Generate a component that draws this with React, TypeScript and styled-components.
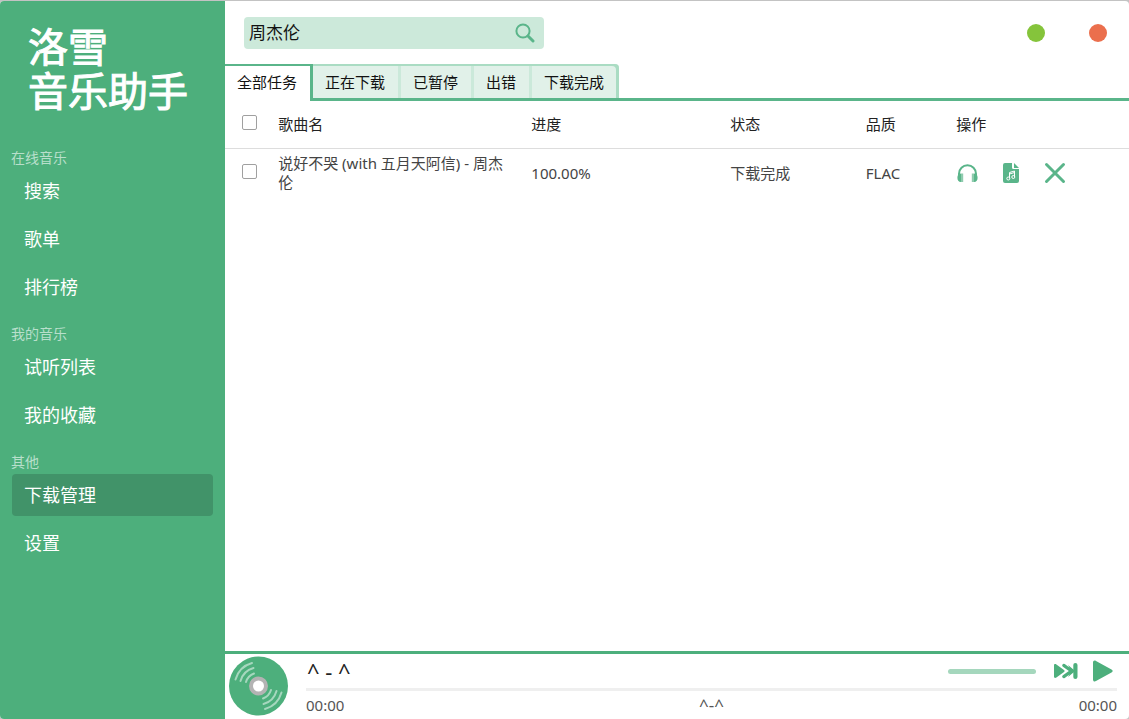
import React from "react";
import styled, { createGlobalStyle, css } from "styled-components";

const green = "#4daf7c";
const soft = "#5ab58a";
const cjk = `"Noto Sans", "Noto Sans CJK SC", sans-serif`;

const Global = createGlobalStyle`
  *, *::before, *::after { box-sizing: border-box; }
  body { margin: 0; background: #c3c3c3; font-family: ${cjk}; font-size: 15px; color: #333; }
  button, input { font: inherit; }
`;

const Shell = styled.div`
  display: flex;
  min-height: calc(100vh - 1px);
  margin-top: 1px;
  border-radius: 4px;
  overflow: hidden;
  background: #fff;
`;

const Sidebar = styled.aside`
  flex: 0 0 225px;
  padding: 22px 12px 12px;
  background: ${green};
  color: #fff;
`;

const Logo = styled.h1`
  margin: 0;
  padding: 0 0 21px 16px;
  font-family: "Noto Sans CJK SC", sans-serif;
  font-size: 40px;
  line-height: 44px;
  font-weight: 400;
  white-space: nowrap;
  -webkit-text-stroke: 1px #fff;
`;

const NavGroup = styled.section`
  margin-top: 14px;
`;

const NavLabel = styled.h2`
  margin: 0 0 0 -1px;
  font-size: 14px;
  line-height: 24px;
  font-weight: 400;
  color: #b8dfcb;
`;

const NavList = styled.ul`
  display: grid;
  gap: 6px;
  margin: 0;
  padding: 0;
  list-style: none;
`;

const NavLink = styled.a<{ $active?: boolean }>`
  display: block;
  padding: 0 12px;
  border-radius: 4px;
  font-size: 18px;
  line-height: 42px;
  color: #fff;
  text-decoration: none;
  background: ${(p) => (p.$active ? "#419369" : "transparent")};
`;

const Main = styled.main`
  display: flex;
  flex: 1;
  flex-direction: column;
  min-width: 0;
`;

const Toolbar = styled.header`
  display: flex;
  align-items: center;
  justify-content: space-between;
  padding: 16px 22px 15px 19px;
`;

const Search = styled.form`
  display: flex;
  align-items: center;
  width: 300px;
  height: 32px;
  border-radius: 4px;
  background: #cce9da;
`;

const SearchInput = styled.input`
  flex: 1;
  min-width: 0;
  padding: 0 0 0 5px;
  border: 0;
  outline: 0;
  background: transparent;
  font-size: 17px;
  line-height: 32px;
  color: #111;
`;

const IconButton = styled.button`
  display: flex;
  flex: none;
  padding: 0;
  border: 0;
  background: none;
  color: ${soft};
  cursor: pointer;
`;

const SearchButton = styled(IconButton)`
  padding: 0 9px 0 8px;
`;

const WindowButtons = styled.div`
  display: flex;
  gap: 44px;
`;

const Dot = styled.button<{ $color: string }>`
  width: 18px;
  height: 18px;
  padding: 0;
  border: 0;
  border-radius: 50%;
  background: ${(p) => p.$color};
`;

const Tabs = styled.div`
  display: flex;
  height: 37px;
`;

const Tab = styled.button<{ $active?: boolean }>`
  padding: 0 16px 2px 12px;
  border: 0;
  background: #e1f1e9;
  box-shadow: inset 0 -3px ${soft}, inset 0 2px #aadcc3, inset -3px 0 #cbe9da;
  font-size: 15px;
  line-height: 34px;
  color: #111;
  white-space: nowrap;
  &:last-of-type {
    padding-right: 15px;
    border-top-right-radius: 4px;
    box-shadow: inset 0 -3px ${soft}, inset -3px 2px #aadcc3;
  }
  ${(p) =>
    p.$active &&
    css`
      background: #fff;
      box-shadow: inset -3px 2px ${soft};
    `}
`;

const TabRule = styled.div`
  flex: 1;
  border-bottom: 3px solid ${soft};
`;

const Content = styled.div`
  flex: 1;
`;

const Table = styled.table`
  width: 100%;
  table-layout: fixed;
  border-collapse: collapse;
  text-align: left;
  line-height: 19px;
`;

const Col = styled.col<{ $w: number }>`
  width: ${(p) => p.$w}%;
`;

const HeadCell = styled.th`
  height: 47px;
  padding: 0 8px;
  border-bottom: 1px solid #ddd;
  font-weight: 400;
  color: #222;
`;

const Cell = styled.td`
  height: 50px;
  padding: 0 8px;
  color: #444;
`;

const Check = styled.input`
  display: block;
  width: 15px;
  height: 15px;
  margin: 0 0 4px 9px;
  border: 1px solid #a0a0a0;
  border-radius: 2px;
  background: #fff;
  appearance: none;
  &:checked { background: ${green}; }
`;

const Actions = styled.div`
  display: flex;
  gap: 22px;
`;

const Player = styled.footer`
  display: flex;
  border-top: 3px solid ${green};
  padding: 0 12px 0 4px;
`;

const Disc = styled.svg`
  flex: none;
  margin: 2px 17px 0 0;
`;

const PlayerBody = styled.div`
  flex: 1;
  min-width: 0;
`;

const PlayerTop = styled.div`
  display: flex;
  align-items: center;
  height: 34px;
  padding: 0 3px 0 1px;
`;

const Song = styled.div`
  flex: 1;
  font-size: 22px;
  line-height: 34px;
  color: #222;
`;

const Volume = styled.input`
  width: 88px;
  height: 5px;
  margin: 0 18px 0 0;
  border-radius: 3px;
  background: #a5d7bd;
  appearance: none;
  &::-webkit-slider-thumb { appearance: none; width: 0; height: 0; }
`;

const NextButton = styled(IconButton)`
  color: ${green};
`;

const PlayButton = styled(IconButton)`
  margin-left: 14px;
  color: ${green};
`;

const Track = styled.div`
  height: 3px;
  background: #efefef;
`;

const PlayerBottom = styled.div`
  display: grid;
  grid-template-columns: 1fr auto 1fr;
  line-height: 28px;
  color: #555;
`;

const Lyric = styled.span`
  font-size: 17px;
`;

const TotalTime = styled.span`
  text-align: right;
`;

const groups = [
  { label: "在线音乐", items: ["搜索", "歌单", "排行榜"] },
  { label: "我的音乐", items: ["试听列表", "我的收藏"] },
  { label: "其他", items: ["下载管理", "设置"] },
];
const tabs = ["全部任务", "正在下载", "已暂停", "出错", "下载完成"];

export default function App() {
  return (
    <>
      <Global />
      <Shell>
        <Sidebar>
          <Logo>洛雪<br />音乐助手</Logo>
          <nav>
            {groups.map((g) => (
              <NavGroup key={g.label}>
                <NavLabel>{g.label}</NavLabel>
                <NavList>
                  {g.items.map((item) => (
                    <li key={item}>
                      <NavLink href="#" $active={item === "下载管理"}>{item}</NavLink>
                    </li>
                  ))}
                </NavList>
              </NavGroup>
            ))}
          </nav>
        </Sidebar>
        <Main>
          <Toolbar>
            <Search onSubmit={(e) => e.preventDefault()}>
              <SearchInput aria-label="搜索" defaultValue="周杰伦" />
              <SearchButton aria-label="搜索">
                <svg width="20" height="20" viewBox="0 0 20 20" fill="none" stroke="currentColor">
                  <circle cx="8" cy="8" r="6.6" strokeWidth="2" />
                  <path d="M13 13l5 5" strokeWidth="3" strokeLinecap="round" />
                </svg>
              </SearchButton>
            </Search>
            <WindowButtons>
              <Dot $color="#85c43b" aria-label="最小化" />
              <Dot $color="#eb6f4d" aria-label="关闭" />
            </WindowButtons>
          </Toolbar>
          <Tabs role="tablist">
            {tabs.map((t, i) => (
              <Tab key={t} role="tab" aria-selected={i === 0} $active={i === 0}>{t}</Tab>
            ))}
            <TabRule />
          </Tabs>
          <Content>
            <Table>
              <colgroup>
                <Col $w={5} />
                <Col $w={28} />
                <Col $w={22} />
                <Col $w={15} />
                <Col $w={10} />
                <Col $w={20} />
              </colgroup>
              <thead>
                <tr>
                  <HeadCell><Check type="checkbox" aria-label="全选" /></HeadCell>
                  <HeadCell>歌曲名</HeadCell>
                  <HeadCell>进度</HeadCell>
                  <HeadCell>状态</HeadCell>
                  <HeadCell>品质</HeadCell>
                  <HeadCell>操作</HeadCell>
                </tr>
              </thead>
              <tbody>
                <tr>
                  <Cell><Check type="checkbox" aria-label="选择 说好不哭" /></Cell>
                  <Cell>说好不哭 (with 五月天阿信) - 周杰伦</Cell>
                  <Cell>100.00%</Cell>
                  <Cell>下载完成</Cell>
                  <Cell>FLAC</Cell>
                  <Cell>
                    <Actions>
                      <IconButton aria-label="播放">
                        <svg width="22" height="22" viewBox="0 0 22 22">
                          <path d="M3 14v-2.2a8.500 8.500 0 0 1 17 0V14" fill="none" stroke="currentColor" strokeWidth="2" />
                          <path d="M5 11.500C2.500 11.500 1.400 13.200 1.400 15.700S2.500 20 5 20zM18 11.500c2.500 0 3.600 1.700 3.600 4.200S20.500 20 18 20z" fill="currentColor" />
                          <path d="M5 11.500h2.200V20H5zM15.800 11.500H18V20h-2.200z" fill="#8fcbae" />
                        </svg>
                      </IconButton>
                      <IconButton aria-label="打开文件">
                        <svg width="22" height="22" viewBox="0 0 22 22">
                          <path d="M5 1h7v4.500a1.500 1.500 0 0 0 1.500 1.500H19v12a2 2 0 0 1-2 2H5a2 2 0 0 1-2-2V3a2 2 0 0 1 2-2z" fill="currentColor" />
                          <path d="M14 1l5 5h-5z" fill="currentColor" />
                          <path d="M9.500 16.500v-6l5-1.500v6M9.500 12l5-1.500" fill="none" stroke="#fff" strokeWidth="1" />
                          <circle cx="8.300" cy="16.500" r="1.500" fill="none" stroke="#fff" />
                          <circle cx="13.300" cy="15" r="1.500" fill="none" stroke="#fff" />
                        </svg>
                      </IconButton>
                      <IconButton aria-label="删除">
                        <svg width="22" height="22" viewBox="0 0 22 22">
                          <path d="M2.500 2.500l17 17M19.500 2.500l-17 17" fill="none" stroke="currentColor" strokeWidth="3" strokeLinecap="round" />
                        </svg>
                      </IconButton>
                    </Actions>
                  </Cell>
                </tr>
              </tbody>
            </Table>
          </Content>
          <Player>
            <Disc width="60" height="60" viewBox="0 0 60 60">
              <circle cx="29.500" cy="30" r="29.500" fill={green} />
              <circle cx="29.500" cy="30" r="7.500" fill="#fff" stroke="#b3b3b3" strokeWidth="4" />
              <g fill="none" stroke="#fff" strokeOpacity="0.500" strokeWidth="2" strokeLinecap="round">
                <path d="M6.500 23.500A24 24 0 0 1 23 7M11.500 25A18.700 18.700 0 0 1 24.500 12M17 26A13.200 13.200 0 0 1 25 17.500" />
                <path d="M52.500 36.500A24 24 0 0 1 36 53M47.500 35A18.700 18.700 0 0 1 34.500 48M42 34A13.200 13.200 0 0 1 34 42.500" />
              </g>
            </Disc>
            <PlayerBody>
              <PlayerTop>
                <Song>^ - ^</Song>
                <Volume type="range" aria-label="音量" defaultValue={100} />
                <NextButton aria-label="下一首">
                  <svg width="24" height="18" viewBox="0 0 24 18" fill="currentColor">
                    <path d="M0 3.500C0 2 1.200 1.700 2.400 2.500L10 8a1.200 1.200 0 0 1 0 2l-7.600 5.500C1.200 16.300 0 16 0 14.500z" />
                    <path d="M9.800 3.400L16.500 8.200a1 1 0 0 1 0 1.600l-6.700 4.800" fill="none" stroke="currentColor" strokeWidth="3.200" strokeLinecap="round" />
                    <path d="M14 3l6 5v2l-6 5 3-6z" />
                    <rect x="19.300" y="1" width="4.200" height="16" rx="2.100" />
                  </svg>
                </NextButton>
                <PlayButton aria-label="播放">
                  <svg width="22" height="22" viewBox="0 0 22 22" fill="currentColor">
                    <path d="M1 2.500C1 .6 2.500 0 4 .9l15.500 8.600c1.600.9 1.600 2.100 0 3L4 21.100C2.500 22 1 21.400 1 19.500z" />
                  </svg>
                </PlayButton>
              </PlayerTop>
              <Track role="progressbar" aria-label="播放进度" aria-valuenow={0} />
              <PlayerBottom>
                <span>00:00</span>
                <Lyric>^-^</Lyric>
                <TotalTime>00:00</TotalTime>
              </PlayerBottom>
            </PlayerBody>
          </Player>
        </Main>
      </Shell>
    </>
  );
}
